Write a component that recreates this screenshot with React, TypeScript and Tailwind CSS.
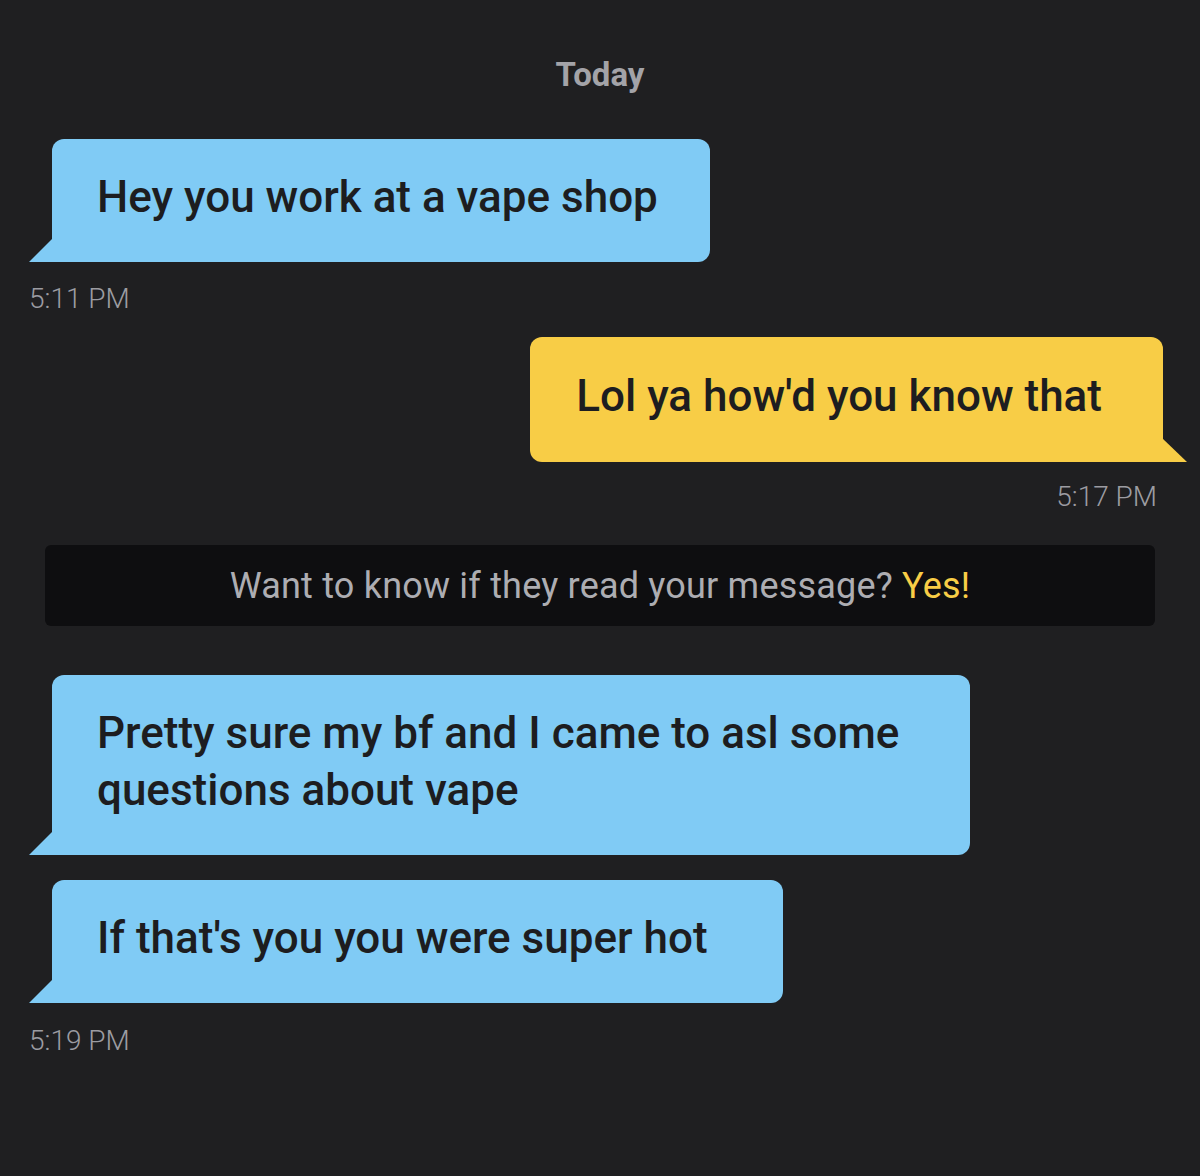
import React from "react"

type Side = "in" | "out"

function Tail({ side }: { side: Side }) {
  if (side === "in") {
    return (
      <svg className="absolute bottom-0 -left-[23px]" width="24" height="24" viewBox="0 0 24 24">
        <polygon points="24,0 24,24 0,24" fill="#80cbf5" />
      </svg>
    )
  }
  return (
    <svg className="absolute bottom-0 -right-[24px]" width="25" height="24" viewBox="0 0 25 24">
      <polygon points="0,0 0,24 25,24" fill="#f8cd46" />
    </svg>
  )
}

function Bubble({ side, children, className = "" }: { side: Side; children: React.ReactNode; className?: string }) {
  const color = side === "in" ? "bg-[#80cbf5] rounded-bl-none" : "bg-[#f8cd46] rounded-br-none"
  return (
    <div className={`relative rounded-[12px] text-[44px] leading-[57px] font-medium text-[#1d1d20] ${color} ${className}`}>
      {children}
      <Tail side={side} />
    </div>
  )
}

function Stamp({ children, right }: { children: React.ReactNode; right?: boolean }) {
  return (
    <div className={`text-[28px] leading-[34px] font-light text-[#9c9ca1] ${right ? "self-end mr-[43px]" : "ml-[29px]"}`}>
      {children}
    </div>
  )
}

export default function App() {
  return (
    <div className="w-[1200px] h-[1176px] bg-[#1f1f21] flex flex-col" style={{ fontFamily: "Roboto, 'Noto Sans', sans-serif" }}>
      <div className="mt-[55px] text-center text-[33px] leading-[40px] font-bold text-[#a3a3a8]">Today</div>

      <div className="mt-[44px] ml-[52px] self-start">
        <Bubble side="in" className="pl-[45px] pt-[30px] pb-[36px] pr-[52px]">Hey you work at a vape shop</Bubble>
      </div>
      <div className="mt-[20px]">
        <Stamp>5:11 PM</Stamp>
      </div>

      <div className="mt-[21px] mr-[37px] self-end">
        <Bubble side="out" className="pl-[46px] pt-[31px] pb-[37px] pr-[61px]">Lol ya how'd you know that</Bubble>
      </div>
      <div className="mt-[18px] flex flex-col">
        <Stamp right>5:17 PM</Stamp>
      </div>

      <div className="mt-[31px] mx-[45px] h-[81px] rounded-[6px] bg-[#0e0e10] flex items-center justify-center text-[36px] tracking-[0.2px] text-[#adadb2]">
        Want to know if they read your message?&nbsp;<span className="text-[#f8cd46]">Yes!</span>
      </div>

      <div className="mt-[49px] ml-[52px] self-start">
        <Bubble side="in" className="w-[918px] pl-[45px] pt-[30px] pb-[36px] pr-[30px] h-[180px]">
          Pretty sure my bf and I came to asl some questions about vape
        </Bubble>
      </div>
      <div className="mt-[25px] ml-[52px] self-start">
        <Bubble side="in" className="pl-[45px] pt-[30px] pb-[36px] pr-[75px]">If that's you you were super hot</Bubble>
      </div>
      <div className="mt-[21px]">
        <Stamp>5:19 PM</Stamp>
      </div>
    </div>
  )
}
